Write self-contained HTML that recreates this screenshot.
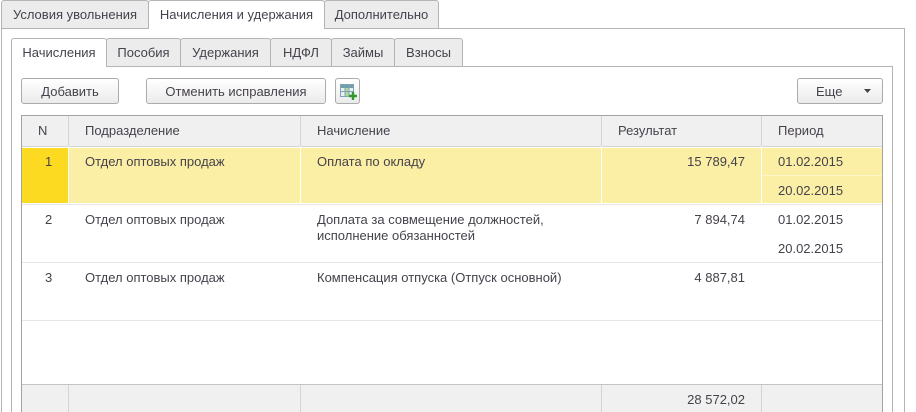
<!DOCTYPE html>
<html style="overflow:hidden;height:412px"><head><meta charset="utf-8">
<style>
html,body{margin:0;padding:0;background:#fff}
body{width:916px;height:412px;position:relative;overflow:hidden;font:13px/14px "Liberation Sans",Arial,sans-serif;color:#4a4a4a}
div{position:absolute;box-sizing:border-box}
#w{left:0;top:0;width:916px;height:412px;overflow:hidden}
.t{white-space:nowrap;color:#46424c}
.tab{background:#ececec;border:1px solid #b4b4b4;border-radius:3px 3px 0 0;text-align:center;white-space:nowrap;color:#46424c}
.act{background:#fff;border-bottom:0;z-index:3}
.btn{border:1px solid #ababab;border-radius:3px;background:linear-gradient(#fff,#f3f3f3 60%,#ebebeb);text-align:center;color:#46424c;height:26px;line-height:25px;top:78px}
.hd{background:#f0f0f0}
.y{background:#fbefa5}
.l{background:#e6e6e6}
.r{text-align:right}
</style></head><body><div id="w">

<div style="left:1px;top:28px;width:904px;height:400px;border:1px solid #b4b4b4"></div>
<div class="tab" style="left:1px;top:0;width:148px;height:29px;line-height:28px">Условия увольнения</div>
<div class="tab act" style="left:148px;top:0;width:177px;height:29px;line-height:28px">Начисления и удержания</div>
<div class="tab" style="left:324px;top:0;width:115px;height:29px;line-height:28px">Дополнительно</div>

<div style="left:11px;top:66px;width:882px;height:360px;border:1px solid #b4b4b4"></div>
<div class="tab act" style="left:11px;top:38px;width:96px;height:29px;line-height:28px">Начисления</div>
<div class="tab" style="left:106px;top:38px;width:75px;height:29px;line-height:28px">Пособия</div>
<div class="tab" style="left:180px;top:38px;width:91px;height:29px;line-height:28px">Удержания</div>
<div class="tab" style="left:270px;top:38px;width:62px;height:29px;line-height:28px">НДФЛ</div>
<div class="tab" style="left:331px;top:38px;width:64px;height:29px;line-height:28px">Займы</div>
<div class="tab" style="left:394px;top:38px;width:69px;height:29px;line-height:28px">Взносы</div>

<div class="btn" style="left:21px;width:98px">Добавить</div>
<div class="btn" style="left:146px;width:180px">Отменить исправления</div>
<div class="btn" style="left:335px;width:25px"></div>
<svg style="position:absolute;left:339px;top:83px" width="18" height="18" viewBox="0 0 18 18">
<rect x="1.500" y="1.500" width="13" height="12" fill="#e6f1f4" stroke="#7fa4b0"/>
<rect x="2" y="2" width="12" height="3" fill="#6f9dab"/>
<rect x="6" y="5" width="4" height="8" fill="#b4d69a"/>
<path d="M6 2v11M10 2v11M2 8.500h12" stroke="#7fa4b0" fill="none"/>
<path d="M14 9v8M10 13h8" stroke="#2f9a2a" stroke-width="2.400" fill="none"/>
</svg>
<div class="btn" style="left:797px;width:86px;text-align:left;padding-left:18px">Еще</div>
<svg style="position:absolute;left:864px;top:89px" width="8" height="5"><path d="M0 0h7L3.500 4z" fill="#444"/></svg>

<!-- table -->
<div style="left:21px;top:115px;width:862px;height:310px;border:1px solid #a3a3a3;border-width:1px 1px 0 1px;background:#fff"></div>
<div class="hd" style="left:22px;top:116px;width:860px;height:30px"></div>
<div style="left:22px;top:146px;width:860px;height:1px;background:#d4d4d4"></div>
<div class="y" style="left:22px;top:148px;width:860px;height:55px"></div>
<div style="left:22px;top:148px;width:46px;height:55px;background:#fcda21"></div>
<div class="l" style="left:22px;top:204px;width:860px;height:1px"></div>
<div class="l" style="left:22px;top:262px;width:860px;height:1px"></div>
<div class="l" style="left:22px;top:320px;width:860px;height:1px"></div>
<div style="left:762px;top:175px;width:120px;height:1px;background:#fff6cc"></div>
<div style="left:22px;top:384px;width:860px;height:1px;background:#c4c4c4"></div>
<div class="hd" style="left:22px;top:385px;width:860px;height:27px"></div>

<div style="left:68px;top:116px;width:1px;height:88px;background:#fff"></div>
<div style="left:300px;top:116px;width:1px;height:88px;background:#fff"></div>
<div style="left:601px;top:116px;width:1px;height:88px;background:#fff"></div>
<div style="left:761px;top:116px;width:1px;height:88px;background:#fff"></div>
<div style="left:68px;top:116px;width:1px;height:30px;background:#d4d4d4"></div>
<div style="left:300px;top:116px;width:1px;height:30px;background:#d4d4d4"></div>
<div style="left:601px;top:116px;width:1px;height:30px;background:#d4d4d4"></div>
<div style="left:761px;top:116px;width:1px;height:30px;background:#d4d4d4"></div>
<div style="left:68px;top:385px;width:1px;height:27px;background:#d4d4d4"></div>
<div style="left:300px;top:385px;width:1px;height:27px;background:#d4d4d4"></div>
<div style="left:601px;top:385px;width:1px;height:27px;background:#d4d4d4"></div>
<div style="left:761px;top:385px;width:1px;height:27px;background:#d4d4d4"></div>

<div class="t" style="left:38px;top:124px">N</div>
<div class="t" style="left:85px;top:124px">Подразделение</div>
<div class="t" style="left:317px;top:124px">Начисление</div>
<div class="t" style="left:618px;top:124px">Результат</div>
<div class="t" style="left:778px;top:124px">Период</div>

<div class="t" style="left:45px;top:155px">1</div>
<div class="t" style="left:85px;top:155px">Отдел оптовых продаж</div>
<div class="t" style="left:317px;top:155px">Оплата по окладу</div>
<div class="t r" style="right:171px;top:155px">15 789,47</div>
<div class="t" style="left:778px;top:155px">01.02.2015</div>
<div class="t" style="left:778px;top:184px">20.02.2015</div>

<div class="t" style="left:45px;top:213px">2</div>
<div class="t" style="left:85px;top:213px">Отдел оптовых продаж</div>
<div class="t" style="left:317px;top:213px">Доплата за совмещение должностей,</div>
<div class="t" style="left:317px;top:229px">исполнение обязанностей</div>
<div class="t r" style="right:171px;top:213px">7 894,74</div>
<div class="t" style="left:778px;top:213px">01.02.2015</div>
<div class="t" style="left:778px;top:242px">20.02.2015</div>

<div class="t" style="left:45px;top:271px">3</div>
<div class="t" style="left:85px;top:271px">Отдел оптовых продаж</div>
<div class="t" style="left:317px;top:271px">Компенсация отпуска (Отпуск основной)</div>
<div class="t r" style="right:171px;top:271px">4 887,81</div>

<div class="t r" style="right:171px;top:393px">28 572,02</div>
</div></body></html>
